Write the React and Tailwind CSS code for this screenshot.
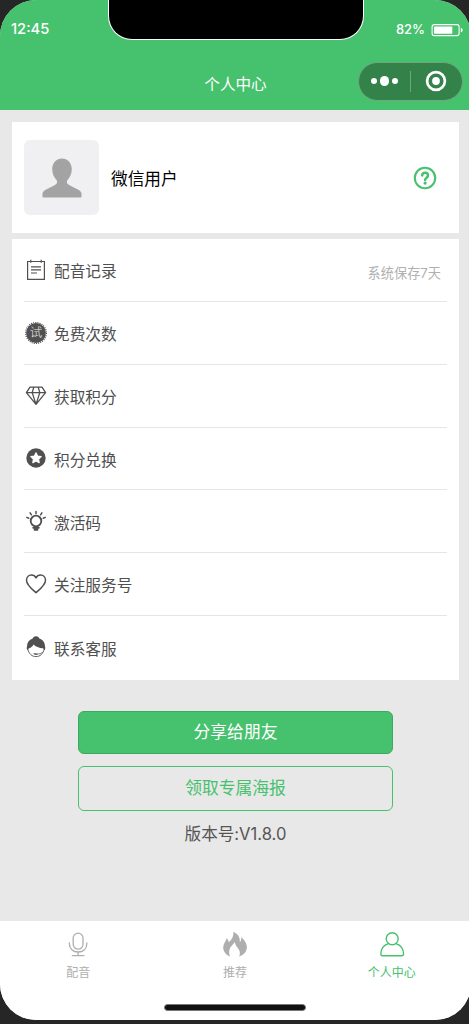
import clsx from 'clsx';

const icon = {
  width: 22,
  height: 22,
  viewBox: '0 0 22 22',
  fill: 'none',
  stroke: 'currentColor',
  strokeWidth: 1.4,
  strokeLinecap: 'round',
  strokeLinejoin: 'round',
};

function RecordIcon() {
  return (
    <svg {...icon} strokeWidth="1.2" strokeLinecap="butt" strokeLinejoin="miter">
      <path d="M2.6 2.5H19.4V20.4H2.6zM5.8 .7V3.7M16.2 .7V3.7M6 7.8H16M6 10.9H16M6 14H12" />
    </svg>
  );
}

function TrialIcon() {
  return (
    <svg {...icon}>
      <circle cx="11" cy="11" r="9.9" fill="currentColor" stroke="none" />
      <circle cx="11" cy="11" r="10.4" strokeWidth="1.2" strokeDasharray="1.1 1.078" strokeLinecap="butt" />
      <text
        x="11"
        y="15.4"
        textAnchor="middle"
        fill="#eee"
        stroke="none"
        className="text-[12.5px] font-light"
      >
        试
      </text>
    </svg>
  );
}

function DiamondIcon() {
  return (
    <svg {...icon} strokeWidth="1.3">
      <path d="M5 2.2H17L20.6 7.6L11 19.4L1.4 7.6zM1.4 7.6H20.6M7.2 7.6L11 19.4L14.8 7.6M7.2 7.6L8.8 2.2M14.8 7.6L13.2 2.2" />
    </svg>
  );
}

function StarIcon() {
  return (
    <svg {...icon}>
      <circle cx="11" cy="11" r="9.7" fill="currentColor" stroke="none" />
      <path
        d="M11 5.8L12.6 9.1L16.2 9.6L13.6 12.1L14.2 15.7L11 14L7.8 15.7L8.4 12.1L5.8 9.6L9.4 9.1z"
        fill="#fff"
        stroke="#fff"
        strokeWidth="1.1"
      />
    </svg>
  );
}

function BulbIcon() {
  return (
    <svg {...icon} strokeWidth="1.5">
      <circle cx="11" cy="11" r="5.3" strokeWidth="1.8" />
      <path d="M11 1.6V3.6M5.1 2.9L6.4 4.8M16.9 2.9L15.6 4.8M1.8 7.4L3.8 8.2M20.2 7.4L18.2 8.2" />
      <path d="M8.3 17.7H13.7M9.6 19.7H12.4" strokeWidth="2" />
    </svg>
  );
}

function HeartIcon() {
  return (
    <svg {...icon} strokeWidth="1.5">
      <path d="M11 19.7C7.5 16.6 1.5 12.2 1.5 7.3C1.5 4.2 3.7 2 6.3 2C8.5 2 10.2 3.3 11 4.9C11.8 3.3 13.5 2 15.7 2C18.3 2 20.5 4.2 20.5 7.3C20.5 12.2 14.5 16.6 11 19.7z" />
    </svg>
  );
}

function ServiceIcon() {
  return (
    <svg {...icon}>
      <path
        d="M7.7 2.6C8.3.9 9.5.2 11 .2S13.7.9 14.3 2.6C18 3.8 20 6.8 20 10.4C20.6 11.4 20.3 13.4 19.3 14.1L18 12.2C14.3 12 10.3 10.5 8.6 8.4C7.4 10.6 5.6 11.9 3.9 12.3L2.7 14.1C1.7 13.4 1.4 11.4 2 10.4C2 6.8 4 3.8 7.7 2.6z"
        fill="currentColor"
        stroke="none"
      />
      <path d="M2.8 13.3C4 18 7 20.6 11 20.6S18 18 19.2 13.3" strokeWidth="0.9" />
      <path d="M8.8 17.6C11 18.6 14 18.5 17.3 16.6" strokeWidth="0.7" />
      <path d="M9.8 18.1H12" strokeWidth="1.3" />
    </svg>
  );
}

function MicIcon() {
  return (
    <svg width="26" height="26" viewBox="0 0 26 26" fill="none" stroke="currentColor" strokeWidth="1.3" strokeLinecap="round">
      <rect x="8.2" y="2.2" width="9.8" height="16" rx="4.9" />
      <path d="M4.3 12C4.3 17.8 8 21 13.1 21S21.9 17.8 21.9 12M13.1 21V24.4M7.3 24.6H18.9" />
    </svg>
  );
}

function FireIcon() {
  return (
    <svg width="26" height="26" viewBox="0 0 26 26" fill="currentColor">
      <path d="M11.4.8C16 3 18.4 6.6 17.8 11.2C19 9.8 19.4 8 19.2 6.2C22.6 9 25.1 12.8 24.9 16.4C24.7 20.4 21.8 23.8 17.3 25.4C18.7 21.7 17.6 18.8 15.4 16.4C13.8 14.7 13 13 13 11C10.8 13.6 7.8 16.2 7.3 19.2C7 21.4 7.3 23.4 8 25.4C3.8 23.6 1.2 20.3 1.2 16.4C1.2 12.9 3.7 10.8 4.7 7.3C5.9 8.5 6.5 9.7 6.6 11.2C9.9 8.8 11.8 5.2 11.4.8z" />
    </svg>
  );
}

function UserIcon() {
  return (
    <svg width="26" height="26" viewBox="0 0 26 26" fill="none" stroke="currentColor" strokeWidth="1.4">
      <circle cx="13.2" cy="7.7" r="6" />
      <path d="M9.4 12.6C4.8 14 2 18.2 1.8 23C1.8 24.2 2.3 24.8 3.5 24.8H22.9C24.1 24.8 24.6 24.2 24.6 23C24.4 18.2 21.6 14 17 12.6" />
    </svg>
  );
}

const menu = [
  { label: '配音记录', Icon: RecordIcon, note: '系统保存7天' },
  { label: '免费次数', Icon: TrialIcon },
  { label: '获取积分', Icon: DiamondIcon },
  { label: '积分兑换', Icon: StarIcon },
  { label: '激活码', Icon: BulbIcon },
  { label: '关注服务号', Icon: HeartIcon },
  { label: '联系客服', Icon: ServiceIcon },
];

const tabs = [
  { label: '配音', Icon: MicIcon },
  { label: '推荐', Icon: FireIcon },
  { label: '个人中心', Icon: UserIcon, active: true },
];

function Header() {
  return (
    <header className="relative h-[110px] shrink-0 bg-[#46c16d] text-white">
      {/* Notch */}
      <div className="absolute -top-px left-[108px] h-[41px] w-[256px] rounded-b-[24px] border border-t-0 border-white bg-black" />
      <div className="flex h-[60px] items-center justify-between pr-[7px] pl-[11px]">
        <span className="-mt-[2px] text-[14.7px] font-medium">12:45</span>
        <div className="flex items-center gap-[6px]">
          <span className="text-[13px] font-medium">82%</span>
          <svg width="33" height="14" viewBox="0 0 33 14" fill="none">
            <rect x="1.1" y="1.6" width="27" height="11" rx="2.2" stroke="#fff" strokeWidth="1.1" />
            <rect x="3" y="3.5" width="18.3" height="7.2" rx="0.8" fill="#fff" />
            <path d="M29.8 4.8C32.3 5.6 32.3 8.6 29.8 9.4z" fill="#fff" />
          </svg>
        </div>
      </div>
      <div className="grid h-[46px] grid-cols-[1fr_auto_1fr] items-center">
        <h1 className="col-start-2 pt-[3px] text-[15.6px]">个人中心</h1>
        {/* Mini program capsule */}
        <div className="mr-2 -mt-[4px] flex h-[39px] w-[105px] items-center justify-self-end rounded-full border border-[#6fa781] bg-[#33824a]">
          <div className="flex flex-1 items-center justify-center gap-[2.5px]">
            <i className="size-[6.5px] rounded-full bg-white" />
            <i className="size-[9.5px] rounded-full bg-white" />
            <i className="size-[6.5px] rounded-full bg-white" />
          </div>
          <div className="h-[21px] w-px bg-[#6fa781]" />
          <svg className="mr-[15px] ml-[14px]" width="22" height="22" viewBox="0 0 22 22" fill="none">
            <circle cx="11" cy="11" r="8.9" stroke="#fff" strokeWidth="2.7" />
            <circle cx="11" cy="11" r="3.9" fill="#fff" />
          </svg>
        </div>
      </div>
    </header>
  );
}

function ProfileCard() {
  return (
    <section className="flex h-[111px] shrink-0 items-center bg-white pr-[22px] pl-3">
      <div className="flex size-[75px] items-center justify-center rounded-[6px] bg-[#f0f0f2]">
        <svg width="40" height="40" viewBox="0 0 40 40" fill="#a3a3a3">
          <path d="M20 .5C14.5.5 10.2 5 10.2 11.3C10.2 16 12.2 19.5 14.7 22.2C15.8 24.5 14.7 26 12.5 27.2L3.2 32C1.2 33.2.5 34.5.5 36V38.5C.5 39.2.8 39.5 1.5 39.5H38.5C39.2 39.5 39.5 39.2 39.5 38.5V36C39.5 34.5 38.8 33.2 36.8 32L27.5 27.2C25.3 26 24.2 24.5 25.3 22.2C27.8 19.5 29.8 16 29.8 11.3C29.8 5 25.5.5 20 .5z" />
        </svg>
      </div>
      <span className="ml-3 flex-1 pt-[4px] text-[16.7px] text-black">微信用户</span>
      <svg width="24" height="24" viewBox="0 0 24 24" fill="none" stroke="#46c16d" strokeLinecap="round">
        <circle cx="12" cy="12" r="10.2" strokeWidth="2.1" />
        <path d="M9.2 9.4C9.3 7.7 10.3 6.8 12.1 6.8C13.9 6.8 15 7.9 15 9.4C15 11.7 12.1 11.7 12.1 14.1" strokeWidth="2.5" />
        <circle cx="12.1" cy="17.1" r="1.6" fill="#46c16d" stroke="none" />
      </svg>
    </section>
  );
}

export default function App() {
  return (
    <div className="h-[1024px] w-[469px] overflow-hidden bg-[#262626] font-['Inter','Noto_Sans_CJK_SC',sans-serif]">
      <div className="flex h-[1020px] w-[471px] flex-col overflow-hidden rounded-[36px] bg-[#e8e8e8]">
        <Header />

        <main className="flex flex-1 flex-col px-3 pt-3">
          <ProfileCard />

          <ul className="mt-[6px] h-[441px] bg-white px-3 text-[#505050]">
            {menu.map(({ label, Icon, note }) => (
              <li key={label} className="flex h-[62.85px] items-center border-b border-[#e6e6e6] pl-px last:border-0">
                <Icon />
                <span className="ml-[7px] flex-1 pt-[4px] text-[15.7px]">{label}</span>
                {note && <span className="mt-[7px] mr-[6px] text-[13.2px] text-[#b0b0b0]">{note}</span>}
              </li>
            ))}
          </ul>

          <div className="mt-[31px] flex flex-col items-center text-[16.8px]">
            <button className="h-[43px] w-[315px] rounded-[6px] border border-[#3ca961] bg-[#46c16d] text-white">
              分享给朋友
            </button>
            <button className="mt-3 h-[45px] w-[315px] rounded-[6px] border border-[#46c16d] text-[#46c16d]">
              领取专属海报
            </button>
            <p className="mt-[11px] text-[16.6px] text-[#555]">版本号:V1.8.0</p>
          </div>
        </main>

        {/* Tab bar */}
        <footer className="h-[99px] shrink-0 bg-white">
          <nav className="grid h-[83px] w-[470px] grid-cols-3 pt-[10px]">
            {tabs.map(({ label, Icon, active }) => (
              <div
                key={label}
                className={clsx('flex flex-col items-center', active ? 'text-[#46c16d]' : 'text-[#aeaeae]')}
              >
                <Icon />
                <span className="mt-[7px] text-[12px] leading-[18px]">{label}</span>
              </div>
            ))}
          </nav>
          <div className="ml-[164px] h-[7px] w-[142px] rounded-full border border-[#777] bg-[#111]" />
        </footer>
      </div>
    </div>
  );
}
